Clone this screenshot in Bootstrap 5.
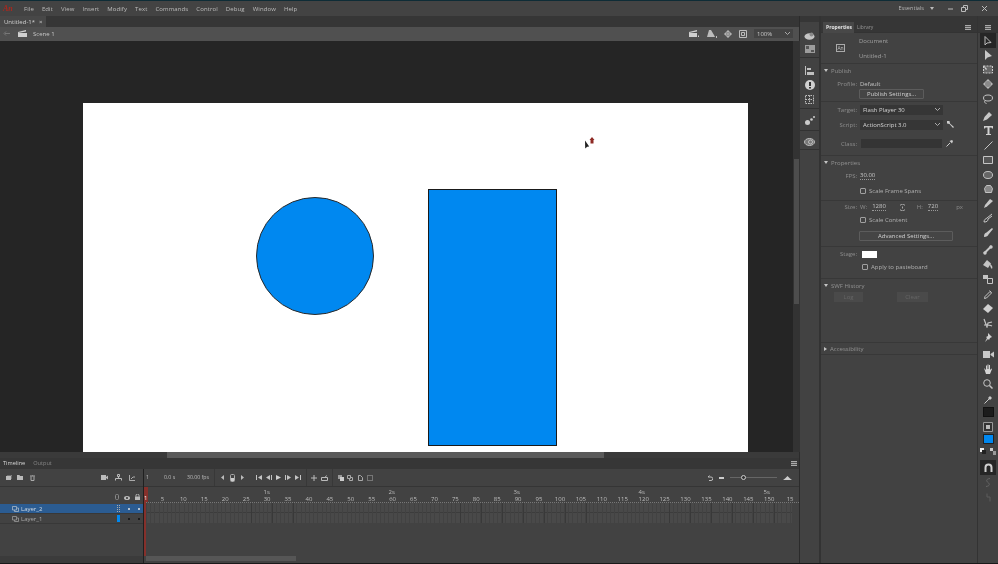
<!DOCTYPE html>
<html lang="en"><head><meta charset="utf-8"><title>Animate</title>
<link href="https://cdn.jsdelivr.net/npm/bootstrap@5.3.0/dist/css/bootstrap.min.css" rel="stylesheet">
<style>
html,body{margin:0;height:564px;overflow:hidden;background:#424242}
body{font-family:"Open Sans","Liberation Sans",sans-serif;font-size:6px;line-height:1;color:#bdbdbd}
svg{display:block;flex:none}
.app{width:998px;height:564px;border-top:1px solid #0e2c36;border-bottom:1px solid #191919;filter:blur(.35px)}
.menubar{height:15px;background:#434343;padding-left:3px;color:#bcbcbc}
.logo{color:#a8281f;font-weight:700;font-size:8px;width:21px;font-family:"Liberation Serif",serif;font-style:italic}
.mi{margin-right:8px;font-size:6px;letter-spacing:.1px}
.essential{margin-left:auto;padding-right:10px;color:#b4b4b4;font-size:5.6px}
.e-arrow{margin-left:6px}.e-min{margin-left:13px}.e-res{margin-left:7px}.e-cls{margin-left:13px}
.mainarea{height:547px}
.leftcol{width:800px;border-right:1px solid #2b2b2b}
.tabrow{height:11px;background:#363636}
.doctab{width:46px;height:11px;background:#484848;padding-left:4px;gap:4px;color:#cfcfcf}
.scenebar{height:14px;background:#505050;padding:0 6px 0 3px;color:#c8c8c8}
.backarrow{margin-right:8px}
.scene-name{margin-left:6px}
.sceneicons{gap:7px}
.zoomsel{width:39px;height:9px;background:#434343;margin-left:7px;padding:0 3px;justify-content:space-between}
.stagewrap{height:417px;background:#252525;position:relative;padding:62px 0 0 83px}
.paper{width:665px;height:349px;background:#fff;position:relative;overflow:hidden}
.vtrack{position:absolute;left:793px;top:0;bottom:0;width:7px;background:#333}
.vthumb{position:absolute;top:118px;left:1px;width:5px;height:145px;background:#4d4d4d}
.htrack{height:6px;background:#3a3a3a;position:relative}
.hthumb{position:absolute;left:167px;top:0;width:437px;height:6px;background:#5a5a5a}
.shape-c{position:absolute;left:173px;top:94px;width:118px;height:118px;border-radius:50%;background:#0088f0;border:1px solid #2a2a2a}
.shape-r{position:absolute;left:345px;top:86px;width:129px;height:257px;background:#0088f0;border:1px solid #1a1a1a}
.cursor-mark{position:absolute;left:502px;top:34px}
.timeline{height:105px;background:#424242;position:relative}
.tl-tabs{height:11px;background:#363636;padding-left:3px;gap:8px;color:#d8d8d8;font-size:5.6px}
.tl-tabs .off{color:#868686}
.tl-menu{margin-left:auto;margin-right:2px}
.tl-body{height:94px}
.tl-left{width:144px;border-right:1px solid #202020;flex:none}
.tl-tool{height:18px;padding:0 8px 0 6px;border-bottom:1px solid #353535}
.ml5{margin-left:5px}.ml7{margin-left:7px}
.tl-hdr{height:17px;padding:0 3px 4px 0;justify-content:flex-end;gap:5px}
.layer{height:10px;padding:0 3px 0 12px;gap:2px;color:#a8a8a8;border-bottom:1px solid #383838}
.layer.on{background:#2b5c92;color:#d0dae4}
.lname{width:94px}
.lbar{width:3px;height:7px;background:#0088f0}
.lbar.hollow{background:transparent;border:1px dotted #aaa}
.dot{width:2px;height:2px;border-radius:50%;background:#111;margin-left:6px}
.layer.on .dot{background:#e4e4e4}
.tl-spacer{flex:1 1 auto}
.tl-hs{height:7px;background:#3b3b3b}
.tl-right{position:relative;flex:1 1 auto;overflow:hidden}
.tl-tool2{height:18px;border-bottom:1px solid #353535;padding:0 7px 0 2px;font-size:5.2px}
.c1{width:18px}.c2{width:23px}.c3{width:24px;white-space:nowrap}
.tb{width:9.7px;display:flex;justify-content:center;flex:none}
.sep-v{width:1px;height:17px;background:#383838;margin:0 3px 0 3px;flex:none}
.sg7{width:7px;flex:none}
.tl-end{gap:6px}
.slider{width:47px;height:1px;background:#666;position:relative}
.knob{position:absolute;left:11px;top:-2px;width:5px;height:5px;border:1px solid #ccc;border-radius:50%;background:#333}
.ms-row{height:9px;padding-left:119.500px}
.ms-row span{width:125px;flex:none}
.fnums{height:7px;padding-left:8px;border-bottom:1px dotted #777}
.fnums span{width:20.93px;flex:none;text-align:center}
.frames{height:20px;width:645px;margin-left:3px;background-color:#494949;
 background-image:repeating-linear-gradient(90deg,transparent 0 3.2px,#424242 3.2px 4.18px),repeating-linear-gradient(90deg,transparent 0 19.9px,#393939 19.9px 20.93px),linear-gradient(180deg,transparent 9.5px,#3c3c3c 9.5px 10.5px,transparent 10.5px)}
.hthumb2{height:5px;width:150px;background:#565656;margin:auto 0 2px 2px}
.playhead{position:absolute;left:0;top:18px;bottom:7px;width:2px;background:#86302b}
.playhead-top{position:absolute;left:-1px;top:18px;width:5px;height:15px;background:#86302b;color:#eee;padding:8px 0 0 1px}
.strip{width:21px;background:#424242;border-right:2px solid #333;flex:none}
.strip-top,.tools-top,.prop-top{height:6px;background:#363636}
.sgroup{border-bottom:1px solid #323232;gap:5px}
.g1{height:36px;padding-top:6px}.g2{height:51px;padding-top:3px}.g3{height:22px;padding-top:2px}.g4{height:19px;padding-top:4px}
.props{width:157px;flex:none;border-right:1px solid #333;background:#424242}
.ptabs{height:11px;background:#363636;padding-right:6px;border-bottom:1px solid #333;gap:0}
.ptab{height:11px;padding:0 3px;width:31px;margin-left:2px;background:#484848;color:#e4e4e4;font-weight:700;font-size:5px}
.ptab.off{background:transparent;color:#969696;font-weight:400;width:auto;margin-left:0}
.sec{border-bottom:1px solid #383838}
.doc-sec{height:31px;padding-left:15px}
.doc-icon{width:9px;height:8px;border:1px solid #aaa;font-size:5px;color:#c0c0c0;margin-right:14px}
.doc-txt{gap:9px;color:#a0a0a0}
.sec-h{height:13px;padding-left:3px;color:#929292;gap:3px;font-size:6px}
.sec-h.short{height:11px}
.tri{width:0;height:0;border-left:2.5px solid transparent;border-right:2.5px solid transparent;border-top:3px solid #c4c4c4}
.tri.right{border-top:2.5px solid transparent;border-bottom:2.5px solid transparent;border-left:3px solid #c4c4c4;border-right:0}
.lb{width:36px;text-align:right;margin-right:3px;color:#8e8e8e;flex:none}
.h10r{height:10px}.h12r{height:12px}.h14r{height:14px}.h15r{height:15px}.h17r{height:17px}.h23r{height:23px}
.up2{margin-top:-2px}.pb2r{padding-bottom:2px}.pb5r{padding-bottom:5px}
.val{color:#c4c4c4;white-space:nowrap}
.dotted{border-bottom:1px dotted #999;padding-bottom:1px}
.pbtn{height:10px;border:1px solid #5c5c5c;color:#d0d0d0;background:#454545;margin-left:38px;border-radius:1px}
.w64{width:65px}.w94{width:94px}
.psel{width:83px;height:10px;background:#363636;color:#d4d4d4;padding:0 3px;justify-content:space-between}
.pinput{width:81px;height:9px;background:#343434;margin-left:1px}
.chk{width:6px;height:6px;border:1px solid #a0a0a0;border-radius:1px;margin-right:3px;flex:none}
.ind{padding-left:39px;color:#b0b0b0}
.ind2{padding-left:41px;color:#b0b0b0}
.swatch{width:15px;height:7px;background:#fff;margin-left:2px}
.w-sp{margin:0 5px}
.wlab{color:#8e8e8e}
.lnk{margin:0 11px 0 8px}
.pxl{margin-left:13px}
.dbtn{height:10px;background:#4a4a4a;color:#666;margin-left:13px;width:29px}
.dbtn.two{margin-left:34px;width:31px}
.swf{height:64px}
.tools{width:20px;flex:none;background:#424242}
.tool{height:14.6px;flex:none}
.tool.sel{background:#262626;margin:0 2px;height:15px}
.tool.t12{height:12px}.tool.t13{height:13px}.tool.t11{height:11px}
.mb2r{margin-bottom:2px}
.tgap{height:2.5px;flex:none}
.swc{width:11px;height:10px;background:#1c1c1c;border:1px solid #111}
.swc.blue{background:#0088f0;border-color:#222}
.snap{background:#262626;margin:0 2px;height:15px}
</style></head><body>
<div class="app d-flex flex-column">
<div class="menubar d-flex align-items-center">
 <span class="logo">An</span>
 <span class="mi">File</span><span class="mi">Edit</span><span class="mi">View</span><span class="mi">Insert</span><span class="mi">Modify</span><span class="mi">Text</span><span class="mi">Commands</span><span class="mi">Control</span><span class="mi">Debug</span><span class="mi">Window</span><span class="mi">Help</span>
 <div class="essential d-flex align-items-center"><span>Essentials</span>
  <svg class="e-arrow" width="4" height="3" viewBox="0 0 4 3"><path d="M0 0h4L2 3z" fill="#bbb"/></svg>
  <svg class="e-min" width="7" height="7" viewBox="0 0 7 7"><path d="M1 4h5" stroke="#bbb"/></svg>
  <svg class="e-res" width="7" height="7" viewBox="0 0 7 7" fill="none" stroke="#bbb"><path d="M.5 2.500h4v4h-4zM2.500 2V.5h4v4H5"/></svg>
  <svg class="e-cls" width="7" height="7" viewBox="0 0 7 7" stroke="#bbb"><path d="M1 1l5 5M6 1L1 6"/></svg>
 </div>
</div>
<div class="mainarea d-flex">
 <div class="leftcol d-flex flex-column">
  <div class="tabrow"><div class="doctab d-flex align-items-center"><span>Untitled-1*</span><span>×</span></div></div>
  <div class="scenebar d-flex align-items-center">
   <svg class="backarrow" width="7" height="5" viewBox="0 0 7 5"><path d="M7 2.500H2M3 .5l-2 2 2 2" stroke="#777" fill="none"/></svg>
   <svg width="9" height="7" viewBox="0 0 9 7"><path d="M0 2l8-2v1.500L0 3zM0 3h9v4H0z" fill="#d0d0d0"/></svg>
   <span class="scene-name">Scene 1</span>
   <div class="flex-grow-1"></div>
   <div class="d-flex align-items-center sceneicons">
    <svg width="10" height="7" viewBox="0 0 10 7"><path d="M0 2l8-2v1.500L0 3zM0 3h8v4H0zM9 5.500h1V7H9z" fill="#d0d0d0"/></svg>
    <svg width="11" height="9" viewBox="0 0 11 9"><path d="M1 8l2-7h2l3 5 1 2zM10 7h1v2h-1z" fill="#bcbcbc"/></svg>
    <svg width="8" height="8" viewBox="0 0 8 8" fill="none" stroke="#bcbcbc"><circle cx="4" cy="4" r="2.500"/><path d="M4 0v8M0 4h8"/></svg>
    <svg width="8" height="8" viewBox="0 0 8 8" fill="none" stroke="#bcbcbc"><path d="M.5.500h7v7h-7z"/><path d="M2.500 2.500h3v3h-3z"/></svg>
   </div>
   <div class="zoomsel d-flex align-items-center"><span>100%</span><svg width="5" height="3" viewBox="0 0 5 3"><path d="M0 0l2.500 2.500L5 0" stroke="#aaa" fill="none"/></svg></div>
  </div>
  <div class="stagewrap">
   <div class="paper">
    <div class="shape-c"></div>
    <div class="shape-r"></div>
    <svg class="cursor-mark" width="12" height="13" viewBox="0 0 12 13"><path d="M0 3.500l.2 8 2-1.800 2-.2z" fill="#222"/><path d="M7 0l2.500 3H8.500v3.500h-3V3H4.500z" fill="#8e2a24"/></svg>
   </div>
   <div class="vtrack"><div class="vthumb"></div></div>
  </div>
  <div class="htrack"><div class="hthumb"></div></div>
  <div class="timeline d-flex flex-column">
   <div class="tl-tabs d-flex align-items-center"><span>Timeline</span><span class="off">Output</span>
    <svg class="tl-menu" width="6" height="5" viewBox="0 0 6 5"><path d="M0 0h6v5H0z" fill="#aaa"/><path d="M0 1.500h6M0 3.500h6" stroke="#555"/></svg></div>
   <div class="tl-body d-flex">
    <div class="tl-left d-flex flex-column">
     <div class="tl-tool d-flex align-items-center">
      <svg width="6" height="6" viewBox="0 0 6 6"><path d="M0 1h5v4H0z" fill="#bbb"/><path d="M1 0h5v4" fill="none" stroke="#999"/></svg>
      <svg class="ml5" width="6" height="5" viewBox="0 0 6 5"><path d="M0 0h2.500l.5 1h3v4H0z" fill="#bbb"/></svg>
      <svg class="ml7" width="5" height="6" viewBox="0 0 5 6" fill="none" stroke="#aaa"><path d="M0 1h5M1 1.500V5.500h3V1.500M2 0h1"/></svg>
      <div class="flex-grow-1"></div>
      <svg width="7" height="5" viewBox="0 0 7 5"><path d="M0 0h5v5H0zM5 2l2-1.500v4L5 3z" fill="#bbb"/></svg>
      <svg class="ml7" width="7" height="7" viewBox="0 0 7 7" fill="none" stroke="#bbb"><path d="M2.500.5h2v2h-2zM3.500 2.500V4M.5 6.500V4.500h6v2"/></svg>
      <svg class="ml7" width="6" height="6" viewBox="0 0 6 6" fill="none" stroke="#aaa"><path d="M.5 0v5.500H6M2 4l2-2h2"/></svg>
     </div>
     <div class="tl-hdr d-flex align-items-end">
      <svg width="4" height="6" viewBox="0 0 4 6"><rect x=".5" y=".5" width="3" height="5" rx="1" fill="none" stroke="#888"/></svg>
      <svg width="6" height="4" viewBox="0 0 6 4"><ellipse cx="3" cy="2" rx="3" ry="2" fill="#bbb"/><circle cx="3" cy="2" r="1" fill="#333"/></svg>
      <svg width="5" height="6" viewBox="0 0 5 6"><path d="M0 2.500h5V6H0z" fill="#bbb"/><path d="M1 2.500V1.500a1.500 1.500 0 0 1 3 0v1" stroke="#bbb" fill="none"/></svg>
     </div>
     <div class="layer on d-flex align-items-center">
      <svg width="7" height="6" viewBox="0 0 7 6" fill="none" stroke="#a8b8c8" stroke-width=".8"><path d="M.5.500h4v3.500h-4zM2.500 4v1.500h4V2H4.500"/></svg>
      <span class="lname">Layer_2</span><span class="lbar hollow"></span><span class="dot"></span><span class="dot"></span>
     </div>
     <div class="layer d-flex align-items-center">
      <svg width="7" height="6" viewBox="0 0 7 6" fill="none" stroke="#999" stroke-width=".8"><path d="M.5.500h4v3.500h-4zM2.500 4v1.500h4V2H4.500"/></svg>
      <span class="lname">Layer_1</span><span class="lbar"></span><span class="dot"></span><span class="dot"></span>
     </div>
     <div class="tl-spacer"></div>
     <div class="tl-hs"></div>
    </div>
    <div class="tl-right d-flex flex-column">
     <div class="tl-tool2 d-flex align-items-center">
      <span class="c1">1</span><span class="c2">0.0 s</span><span class="c3">30.00 fps</span><span class="sep-v"></span>
      <span class="tb"><svg width="4" height="5" viewBox="0 0 4 5"><path d="M3 0v5L0 2.500z" fill="#bbb"/></svg></span>
      <span class="tb"><svg width="5" height="8" viewBox="0 0 5 8"><rect x=".5" y=".5" width="4" height="7" rx="1" fill="none" stroke="#aaa"/><path d="M1 4h3v3H1z" fill="#ccc"/></svg></span>
      <span class="tb"><svg width="4" height="5" viewBox="0 0 4 5"><path d="M1 0v5l3-2.500z" fill="#bbb"/></svg></span>
      <span class="sg7"></span>
      <span class="tb"><svg width="6" height="5" viewBox="0 0 6 5"><path d="M0 0h1v5H0zM6 0v5L2 2.500z" fill="#c4c4c4"/></svg></span>
      <span class="tb"><svg width="6" height="5" viewBox="0 0 6 5"><path d="M5 0h1v5H5zM4 0v5L0 2.500z" fill="#c4c4c4"/></svg></span>
      <span class="tb"><svg width="5" height="5" viewBox="0 0 5 5"><path d="M0 0v5l5-2.500z" fill="#d0d0d0"/></svg></span>
      <span class="tb"><svg width="6" height="5" viewBox="0 0 6 5"><path d="M0 0h1v5H0zM2 0v5l4-2.500z" fill="#c4c4c4"/></svg></span>
      <span class="tb"><svg width="6" height="5" viewBox="0 0 6 5"><path d="M5 0h1v5H5zM0 0v5l4-2.500z" fill="#c4c4c4"/></svg></span>
      <span class="sep-v"></span>
      <span class="tb"><svg width="6" height="6" viewBox="0 0 6 6"><path d="M3 0v6M0 3h6" stroke="#bbb"/></svg></span>
      <span class="tb"><svg width="7" height="6" viewBox="0 0 7 6" fill="none" stroke="#bbb"><path d="M.5 2.500h6v3h-6zM4 2.500L5.500.5"/></svg></span>
      <span class="sep-v"></span>
      <span class="tb"><svg width="6" height="6" viewBox="0 0 6 6"><path d="M0 0h4v4H0z" fill="#999"/><path d="M2 2h4v4H2z" fill="#ccc"/></svg></span>
      <span class="tb"><svg width="6" height="6" viewBox="0 0 6 6" fill="none" stroke="#aaa"><path d="M.5.500h3v3h-3zM2.500 3.500v2h3v-3h-2"/></svg></span>
      <span class="tb"><svg width="5" height="6" viewBox="0 0 5 6" fill="none" stroke="#aaa"><path d="M.5.500h2l2 2v3h-4z"/></svg></span>
      <span class="tb"><svg width="6" height="6" viewBox="0 0 6 6" fill="none" stroke="#aaa" stroke-dasharray="1 1"><path d="M.5.500h5v5h-5z"/></svg></span>
      <div class="flex-grow-1"></div>
      <div class="d-flex align-items-center tl-end">
       <svg width="6" height="6" viewBox="0 0 6 6" fill="none" stroke="#bbb"><path d="M1 2h3a1.500 1.500 0 0 1 0 3.500H2M1 2l1.500-1.500"/></svg>
       <svg width="5" height="2" viewBox="0 0 5 2"><path d="M0 0h5v2H0z" fill="#ccc"/></svg>
       <div class="slider"><span class="knob"></span></div>
       <svg width="9" height="4" viewBox="0 0 9 4"><path d="M0 4l2-1.500L4.500 0 7 2.500 9 4z" fill="#ccc"/></svg>
      </div>
     </div>
     <div class="ms-row d-flex align-items-center">
      <span>1s</span><span>2s</span><span>3s</span><span>4s</span><span>5s</span>
     </div>
     <div class="fnums d-flex align-items-center">
      <span>5</span><span>10</span><span>15</span><span>20</span><span>25</span><span>30</span><span>35</span><span>40</span><span>45</span><span>50</span><span>55</span><span>60</span><span>65</span><span>70</span><span>75</span><span>80</span><span>85</span><span>90</span><span>95</span><span>100</span><span>105</span><span>110</span><span>115</span><span>120</span><span>125</span><span>130</span><span>135</span><span>140</span><span>145</span><span>150</span><span>15</span>
     </div>
     <div class="frames"></div>
     <div class="hthumb2"></div>
     <div class="playhead"></div>
     <div class="playhead-top">1</div>
    </div>
   </div>
  </div>
 </div>
 <div class="strip d-flex flex-column">
  <div class="strip-top"></div>
  <div class="sgroup g1 d-flex flex-column align-items-center justify-content-center">
   <svg width="11" height="8" viewBox="0 0 11 8"><ellipse cx="5.500" cy="4.500" rx="5" ry="3.200" fill="#c4c4c4"/><circle cx="7.500" cy="2.500" r="2" fill="#8a8a8a"/></svg>
   <svg width="10" height="8" viewBox="0 0 10 8"><path d="M0 0h10v8H0z" fill="#9c9c9c"/><path d="M1 1h3v3H1zM6 5h3v2H6z" fill="#555"/></svg>
  </div>
  <div class="sgroup g2 d-flex flex-column align-items-center justify-content-center">
   <svg width="9" height="9" viewBox="0 0 9 9"><path d="M0 0h1v9H0zM2 2h4v2H2zM2 6h7v3H2z" fill="#c0c0c0"/></svg>
   <svg width="10" height="10" viewBox="0 0 10 10"><circle cx="5" cy="5" r="5" fill="#d0d0d0"/><path d="M4 2h2v4H4zM4 7h2v1.500H4z" fill="#333"/></svg>
   <svg width="9" height="9" viewBox="0 0 9 9" fill="none" stroke="#c0c0c0" stroke-dasharray="1.500 1"><path d="M.5.500h8v8h-8zM.5 4.500h8M4.500.5v8"/></svg>
  </div>
  <div class="sgroup g3 d-flex flex-column align-items-center justify-content-center">
   <svg width="10" height="9" viewBox="0 0 10 9" fill="#ccc"><circle cx="2.500" cy="6.500" r="2.500"/><circle cx="6.500" cy="3.500" r="1.300"/><circle cx="9" cy="1" r="1"/></svg>
  </div>
  <div class="sgroup g4 d-flex flex-column align-items-center justify-content-center">
   <svg width="11" height="8" viewBox="0 0 11 8" fill="none" stroke="#bdbdbd"><ellipse cx="5.500" cy="4" rx="5" ry="3.500" fill="#777"/><circle cx="6.500" cy="4" r="2"/></svg>
  </div>
 </div>
 <div class="props d-flex flex-column">
  <div class="prop-top"></div>
  <div class="ptabs d-flex align-items-center"><span class="ptab d-flex align-items-center">Properties</span><span class="ptab off d-flex align-items-center">Library</span>
   <svg class="ms-auto" width="6" height="5" viewBox="0 0 6 5"><path d="M0 0h6v5H0z" fill="#aaa"/><path d="M0 1.500h6M0 3.500h6" stroke="#555"/></svg></div>
  <div class="sec doc-sec d-flex align-items-center"><span class="doc-icon d-flex align-items-center justify-content-center">An</span><div class="doc-txt d-flex flex-column"><span>Document</span><span>Untitled-1</span></div></div>
  <div class="sec pb2r">
   <div class="sec-h d-flex align-items-center"><span class="tri"></span><span>Publish</span></div>
   <div class="d-flex align-items-center h14r"><span class="lb">Profile:</span><span class="val">Default</span></div>
   <div class="d-flex align-items-center h10r up2"><span class="pbtn w64 d-flex align-items-center justify-content-center">Publish Settings...</span></div>
  </div>
  <div class="sec">
   <div class="d-flex align-items-center h15r"><span class="lb">Target:</span><span class="psel d-flex align-items-center"><span>Flash Player 30</span><svg width="5" height="3" viewBox="0 0 5 3"><path d="M0 0l2.500 2.500L5 0" stroke="#aaa" fill="none"/></svg></span></div>
   <div class="d-flex align-items-center h15r"><span class="lb">Script:</span><span class="psel d-flex align-items-center"><span>ActionScript 3.0</span><svg width="5" height="3" viewBox="0 0 5 3"><path d="M0 0l2.500 2.500L5 0" stroke="#aaa" fill="none"/></svg></span>
    <svg class="ms-1" width="7" height="7" viewBox="0 0 7 7"><path d="M0 0h2.500L3 2.500 7 6 6 7 2.500 3 0 2.500z" fill="#ccc"/></svg></div>
   <div class="d-flex align-items-center h23r"><span class="lb">Class:</span><span class="pinput"></span>
    <svg class="ms-1" width="7" height="7" viewBox="0 0 7 7"><path d="M.5 6.500L4 3" stroke="#ccc"/><path d="M3.500 1L6 3.500 7 1 6 0z" fill="#ccc"/></svg></div>
  </div>
  <div class="sec pb2r">
   <div class="sec-h d-flex align-items-center"><span class="tri"></span><span>Properties</span></div>
   <div class="d-flex align-items-center h14r"><span class="lb">FPS:</span><span class="val dotted">30.00</span></div>
   <div class="d-flex align-items-center h15r ind"><span class="chk"></span><span>Scale Frame Spans</span></div>
  </div>
  <div class="sec pb2r">
   <div class="d-flex align-items-center h12r"><span class="lb">Size:</span><span class="wlab">W:</span><span class="val dotted w-sp">1280</span>
    <svg class="lnk" width="7" height="7" viewBox="0 0 7 7" fill="none" stroke="#aaa"><path d="M1 1.500a3 3 0 0 1 5 0M1 5.500a3 3 0 0 0 5 0M3.500 2.500v2"/></svg>
    <span class="wlab">H:</span><span class="val dotted w-sp">720</span><span class="wlab pxl">px</span></div>
   <div class="d-flex align-items-center h14r ind"><span class="chk"></span><span>Scale Content</span></div>
   <div class="d-flex align-items-center h17r"><span class="pbtn w94 d-flex align-items-center justify-content-center">Advanced Settings...</span></div>
  </div>
  <div class="sec pb5r">
   <div class="d-flex align-items-center h14r"><span class="lb">Stage:</span><span class="swatch"></span></div>
   <div class="d-flex align-items-center h12r ind2"><span class="chk"></span><span>Apply to pasteboard</span></div>
  </div>
  <div class="sec swf">
   <div class="sec-h d-flex align-items-center"><span class="tri"></span><span>SWF History</span></div>
   <div class="d-flex align-items-center h10r"><span class="dbtn d-flex align-items-center justify-content-center">Log</span><span class="dbtn two d-flex align-items-center justify-content-center">Clear</span></div>
  </div>
  <div class="sec"><div class="sec-h short d-flex align-items-center"><span class="tri right"></span><span>Accessibility</span></div></div>
 </div>
 <div class="tools d-flex flex-column">
  <div class="tools-top"></div>
  <div class="ptabs d-flex align-items-center justify-content-center p-0"><svg width="6" height="5" viewBox="0 0 6 5"><path d="M0 0h6v5H0z" fill="#aaa"/><path d="M0 1.500h6M0 3.500h6" stroke="#555"/></svg></div>
  <div class="tool sel d-flex align-items-center justify-content-center"><svg width="8" height="10" viewBox="0 0 8 10"><path d="M1 .5v8.500l2-2 4-.5z" fill="none" stroke="#bbb"/></svg></div>
  <div class="tool d-flex align-items-center justify-content-center"><svg width="8" height="10" viewBox="0 0 8 10"><path d="M1 0v10l2.500-2.500L8 6z" fill="#c8c8c8"/></svg></div>
  <div class="tool d-flex align-items-center justify-content-center"><svg width="11" height="9" viewBox="0 0 11 9"><path d="M.5 1h9v7h-9z" fill="#666" stroke="#ccc" stroke-dasharray="2 1"/><path d="M0 0l4 4-1 1z" fill="#ddd"/></svg></div>
  <div class="tool d-flex align-items-center justify-content-center"><svg width="10" height="10" viewBox="0 0 10 10"><path d="M5 0l5 5-5 5-5-5z" fill="#b8b8b8"/><circle cx="5" cy="5" r="3" fill="#8a8a8a"/></svg></div>
  <div class="tool d-flex align-items-center justify-content-center"><svg width="10" height="10" viewBox="0 0 10 10" fill="none" stroke="#c4c4c4"><ellipse cx="5" cy="4" rx="4.500" ry="3"/><path d="M2 6.500c-1 1 0 3 1.500 3"/></svg></div>
  <div class="tgap"></div>
  <div class="tool d-flex align-items-center justify-content-center"><svg width="10" height="10" viewBox="0 0 10 10"><path d="M0 10l1.500-4L6 1l3 3-5 4.500z" fill="#c8c8c8"/></svg></div>
  <div class="tool d-flex align-items-center justify-content-center"><svg width="9" height="9" viewBox="0 0 9 9"><path d="M0 0h9v2.500H8L7.500 1.500H5.500V8H7v1H2V8h1.500V1.500h-2L1 2.500H0z" fill="#d0d0d0"/></svg></div>
  <div class="tool d-flex align-items-center justify-content-center"><svg width="9" height="9" viewBox="0 0 9 9"><path d="M.5 8.500l8-8" stroke="#c4c4c4"/></svg></div>
  <div class="tool d-flex align-items-center justify-content-center"><svg width="10" height="8" viewBox="0 0 10 8"><path d="M.5.500h9v7h-9z" fill="#555" stroke="#c4c4c4"/></svg></div>
  <div class="tool d-flex align-items-center justify-content-center"><svg width="10" height="8" viewBox="0 0 10 8"><ellipse cx="5" cy="4" rx="4.500" ry="3.500" fill="#666" stroke="#c4c4c4"/></svg></div>
  <div class="tool d-flex align-items-center justify-content-center"><svg width="9" height="9" viewBox="0 0 9 9"><path d="M2.500.5h4l2 3-1 4H1.500l-1-4z" fill="#888" stroke="#c4c4c4"/></svg></div>
  <div class="tool d-flex align-items-center justify-content-center"><svg width="9" height="9" viewBox="0 0 9 9"><path d="M0 9l1-3 5-6 3 2-6 5.500z" fill="#c8c8c8"/></svg></div>
  <div class="tool d-flex align-items-center justify-content-center"><svg width="10" height="10" viewBox="0 0 10 10" fill="none" stroke="#c8c8c8"><path d="M1 9c0-3 2-3 3-4l5-4M1 9c3 0 4-1 4-3l4-3"/></svg></div>
  <div class="tool d-flex align-items-center justify-content-center"><svg width="9" height="9" viewBox="0 0 9 9"><path d="M0 9c0-3 1-4 2.500-4.500L8 0l1 1-4.500 5.500C4 8 2.500 9 0 9z" fill="#c8c8c8"/></svg></div>
  <div class="tgap"></div>
  <div class="tool d-flex align-items-center justify-content-center"><svg width="10" height="10" viewBox="0 0 10 10"><path d="M1 8.500L8.500 1" stroke="#c8c8c8" stroke-width="2"/><circle cx="2" cy="8" r="1.700" fill="#c8c8c8"/><circle cx="8" cy="2" r="1.700" fill="#c8c8c8"/></svg></div>
  <div class="tool d-flex align-items-center justify-content-center"><svg width="10" height="9" viewBox="0 0 10 9"><path d="M0 5l4-5 4 3.500L5 8z" fill="#c4c4c4"/><path d="M7 4c2 1 3 3 2 5-1-1-2-2-2-5z" fill="#c4c4c4"/></svg></div>
  <div class="tool d-flex align-items-center justify-content-center"><svg width="10" height="9" viewBox="0 0 10 9"><path d="M0 0h5v4H0z" fill="#c4c4c4"/><path d="M4.500 3.500h5v5h-5z" fill="none" stroke="#c4c4c4"/></svg></div>
  <div class="tool d-flex align-items-center justify-content-center"><svg width="9" height="10" viewBox="0 0 9 10" fill="none" stroke="#c4c4c4"><path d="M.5 9.500l.5-2 5-5 1.500 1.500-5 5zM5.500 1.500l2 2"/></svg></div>
  <div class="tool d-flex align-items-center justify-content-center"><svg width="10" height="9" viewBox="0 0 10 9"><path d="M0 5l5-5 5 4-5 5z" fill="#d0d0d0"/></svg></div>
  <div class="tool d-flex align-items-center justify-content-center"><svg width="10" height="10" viewBox="0 0 10 10" fill="none" stroke="#c4c4c4" stroke-width="1.200"><path d="M1 1l3 8 1-4 4-1M1 7c2 0 6 0 8 1"/></svg></div>
  <div class="tool d-flex align-items-center justify-content-center"><svg width="8" height="9" viewBox="0 0 8 9"><path d="M4 0l4 4-2 1-1 2-1-1-3 3 2-4-1-1 2-1z" fill="#d0d0d0"/></svg></div>
  <div class="tgap"></div>
  <div class="tool d-flex align-items-center justify-content-center"><svg width="11" height="7" viewBox="0 0 11 7"><path d="M0 0h7v7H0zM7.500 3L11 .5v6L7.500 4z" fill="#c8c8c8"/></svg></div>
  <div class="tool d-flex align-items-center justify-content-center"><svg width="10" height="10" viewBox="0 0 10 10"><path d="M1 4l2 2V1.500h1V5h.500V.5h1V5H6V1h1v5l1.500-1.500L9 5 7 10H3z" fill="#d4d4d4"/></svg></div>
  <div class="tool d-flex align-items-center justify-content-center"><svg width="10" height="10" viewBox="0 0 10 10" fill="none" stroke="#c4c4c4"><circle cx="4" cy="4" r="3.300"/><path d="M6.500 6.500l3 3" stroke-width="1.500"/></svg></div>
  <div class="tgap"></div>
  <div class="tool t12 d-flex align-items-center justify-content-center"><svg width="8" height="8" viewBox="0 0 8 8"><path d="M.5 7.500L5 3" stroke="#c8c8c8"/><path d="M4 2l2-2 2 2-2 2z" fill="#c8c8c8"/></svg></div>
  <div class="tool t13 mb2r d-flex align-items-center justify-content-center"><span class="swc"></span></div>
  <div class="tool t13 d-flex align-items-center justify-content-center"><svg width="10" height="10" viewBox="0 0 10 10"><path d="M.5.500h9v9h-9z" fill="#333" stroke="#999"/><path d="M3 3h4v4H3z" fill="#bbb"/></svg></div>
  <div class="tool t11 d-flex align-items-center justify-content-center"><span class="swc blue"></span></div>
  <div class="tool t13 d-flex align-items-center justify-content-center gap-1"><svg width="6" height="6" viewBox="0 0 6 6"><path d="M0 0h4v4H0z" fill="#eee"/><path d="M2 2h4v4H2z" fill="#222"/></svg><svg width="6" height="7" viewBox="0 0 6 7"><path d="M0 0h3v3H0z" fill="#ccc"/><path d="M3 3h3v4H3z" fill="#999"/></svg></div>
  <div class="tgap"></div>
  <div class="tool snap d-flex align-items-center justify-content-center"><svg width="9" height="9" viewBox="0 0 9 9" fill="none" stroke="#d0d0d0" stroke-width="2"><path d="M1.500 9V4.500a3 3 0 0 1 6 0V9"/></svg></div>
  <div class="tool d-flex align-items-center justify-content-center"><svg width="6" height="9" viewBox="0 0 6 9" fill="none" stroke="#666"><path d="M5 .5C1 1 1 3 3 4.500S5 8 1 8.500"/></svg></div>
  <div class="tool d-flex align-items-center justify-content-center"><svg width="6" height="9" viewBox="0 0 6 9" fill="none" stroke="#5c5c5c"><path d="M2 .5V4h3v4.500"/></svg></div>
 </div>
</div>
</div>
</body></html>
